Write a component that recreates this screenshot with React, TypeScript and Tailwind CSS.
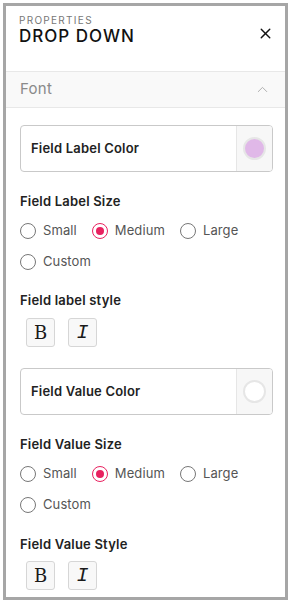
import { X, ChevronUp } from "lucide-react";

const font = { fontFamily: "Inter, 'Noto Sans', sans-serif" };
const slab = { fontFamily: "'DejaVu Serif', 'Liberation Serif', serif" };
const mono = { fontFamily: "'Liberation Mono', 'Courier New', monospace" };

function ColorBox({ label, color }: { label: string; color: string }) {
  return (
    <div className="flex h-[47px] rounded-[4px] border border-[#c9c9c9] overflow-hidden">
      <div className="flex-1 flex items-center pl-[10px] text-[13px] font-semibold tracking-[0.2px] text-[#222]">{label}</div>
      <div className="w-[36px] flex items-center justify-center bg-[#f7f7f7] border-l border-[#e6e6e6]">
        <div className="w-[23px] h-[23px] rounded-full border-2 border-[#e6e6e6]" style={{ backgroundColor: color }} />
      </div>
    </div>
  );
}

function Radio({ label, checked }: { label: string; checked?: boolean }) {
  return (
    <div className="flex items-center gap-[7px] h-[20px]">
      {checked ? (
        <div className="w-[16px] h-[16px] rounded-full border-[1.5px] border-[#e8215f] flex items-center justify-center">
          <div className="w-[8px] h-[8px] rounded-full bg-[#e8215f]" />
        </div>
      ) : (
        <div className="w-[16px] h-[16px] rounded-full border-[1.5px] border-[#777]" />
      )}
      <span className="text-[13px] tracking-[0.1px] text-[#555]">{label}</span>
    </div>
  );
}

function StyleButtons() {
  return (
    <div className="flex gap-[13px] pl-[6px]">
      <div
        className="w-[29px] h-[29px] rounded-[3px] border border-[#d6d6d6] bg-[#f8f8f8] flex items-center justify-center text-[18px] text-[#1a1a1a]"
        style={slab}
      >
        B
      </div>
      <div
        className="w-[29px] h-[29px] rounded-[3px] border border-[#d6d6d6] bg-[#f8f8f8] flex items-center justify-center text-[20px] italic text-[#1a1a1a]"
        style={mono}
      >
        I
      </div>
    </div>
  );
}

function SizeGroup({ title }: { title: string }) {
  return (
    <>
      <div className="mt-[20px] h-[20px] flex items-center text-[13px] font-semibold tracking-[0.2px] text-[#222]">{title}</div>
      <div className="mt-[9px] flex gap-[15px]">
        <Radio label="Small" />
        <Radio label="Medium" checked />
        <Radio label="Large" />
      </div>
      <div className="mt-[11px]">
        <Radio label="Custom" />
      </div>
    </>
  );
}

export default function App() {
  return (
    <div className="w-[291px] h-[603px] bg-white p-[3px]" style={font}>
      <div className="h-full border-[3px] border-[#a6a6a6] flex flex-col overflow-hidden">
        {/* Header */}
        <div className="h-[66px] border-b border-[#e8e8e8] flex justify-between pl-[13px] pr-[11px] pt-[9px]">
          <div>
            <p className="text-[10px] tracking-[1.3px] text-[#777] leading-[11px]">PROPERTIES</p>
            <h1 className="text-[17px] font-medium tracking-[1px] text-[#111] leading-[20px]">DROP DOWN</h1>
          </div>
          <X size={17} strokeWidth={2} className="text-[#111] mt-[10px]" />
        </div>

        {/* Font section */}
        <div className="h-[36px] bg-[#f9f9f9] border-b border-[#e8e8e8] flex items-center justify-between pl-[14px] pr-[14px]">
          <span className="text-[15px] tracking-[0.3px] text-[#8a8a8a]">Font</span>
          <ChevronUp size={17} strokeWidth={1.3} className="text-[#aaa]" />
        </div>

        {/* Body */}
        <div className="pl-[14px] pr-[12px] pt-[17px]">
          <ColorBox label="Field Label Color" color="#e0b8e8" />
          <SizeGroup title="Field Label Size" />
          <div className="mt-[19px] h-[20px] flex items-center text-[13px] font-semibold tracking-[0.2px] text-[#222]">Field label style</div>
          <div className="mt-[7px]">
            <StyleButtons />
          </div>

          <div className="mt-[21px]">
            <ColorBox label="Field Value Color" color="#ffffff" />
          </div>
          <SizeGroup title="Field Value Size" />
          <div className="mt-[20px] h-[20px] flex items-center text-[13px] font-semibold tracking-[0.2px] text-[#222]">Field Value Style</div>
          <div className="mt-[6px]">
            <StyleButtons />
          </div>
        </div>
      </div>
    </div>
  );
}
